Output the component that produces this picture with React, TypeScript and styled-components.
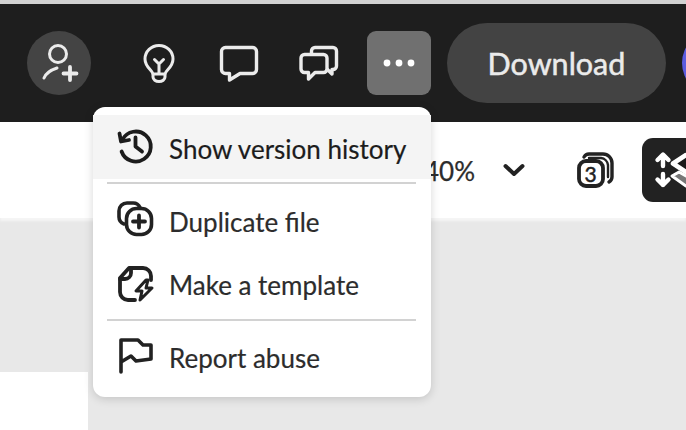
import styled, { createGlobalStyle } from "styled-components";

const Global = createGlobalStyle`
  html, body {
    margin: 0;
    padding: 0;
    background: #e8e8e8;
  }
  * {
    box-sizing: border-box;
  }
`;

const Page = styled.div`
  position: relative;
  width: 686px;
  height: 430px;
  overflow: hidden;
  display: flex;
  flex-direction: column;
  font-family: Lato, "Noto Sans", sans-serif;
  background: #e8e8e8;
  border-top: 4px solid #d2d2d2;
`;

const Header = styled.header`
  flex: none;
  height: 118px;
  background: #1e1e1e;
  display: flex;
  align-items: center;
  padding-left: 27px;
  gap: 16px;
`;

const Avatar = styled.div`
  flex: none;
  width: 64px;
  height: 64px;
  margin-right: 20px;
  border-radius: 50%;
  background: #444;
  display: flex;
  align-items: center;
  justify-content: center;
`;

const IconButton = styled.div<{ $active?: boolean }>`
  flex: none;
  width: 64px;
  height: 64px;
  border-radius: 9px;
  background: ${(p) => (p.$active ? "#707070" : "transparent")};
  display: flex;
  align-items: center;
  justify-content: center;
`;

const DownloadButton = styled.div`
  flex: none;
  width: 219px;
  height: 80px;
  border-radius: 40px;
  background: #434343;
  color: #ebebeb;
  font-size: 30.5px;
  -webkit-text-stroke: 0.5px #ebebeb;
  display: flex;
  align-items: center;
  justify-content: center;
`;

const UserDot = styled.div`
  flex: none;
  width: 64px;
  height: 64px;
  border-radius: 50%;
  background: #5c5ce0;
`;

const Toolbar = styled.div`
  flex: none;
  height: 96px;
  background: #fff;
  display: flex;
  align-items: center;
  padding-left: 424px;
  box-shadow: 0 3px 2px #f5f5f5;
  position: relative;
`;

const Zoom = styled.span`
  flex: none;
  width: 50px;
  padding-top: 2px;
  font-size: 26px;
  -webkit-text-stroke: 0.25px #2c2c2c;
  color: #2c2c2c;
  white-space: nowrap;
`;

const Chevron = styled.div`
  flex: none;
  margin-left: 28px;
  width: 24px;
  height: 24px;
  display: flex;
`;

const Layers = styled.div`
  flex: none;
  margin-left: 51px;
  width: 38px;
  height: 38px;
  position: relative;
  display: flex;
`;

const LayerCount = styled.span`
  position: absolute;
  left: 1px;
  top: 11px;
  width: 25px;
  text-align: center;
  font-size: 21px;
  line-height: 24px;
  -webkit-text-stroke: 0.5px #222;
  color: #222;
`;

const ArrangeTile = styled.div`
  flex: none;
  margin-left: 27px;
  width: 64px;
  height: 64px;
  border-radius: 11px;
  background: #222;
  display: flex;
  align-items: center;
  justify-content: center;
`;

const Workspace = styled.div`
  flex: 1;
  display: flex;
  align-items: flex-end;
`;

const CanvasEdge = styled.div`
  width: 88px;
  height: 58px;
  background: #fff;
`;

const Menu = styled.div`
  position: absolute;
  left: 93px;
  top: 103px;
  width: 338px;
  padding: 8px 0;
  border-radius: 12px;
  background: #fff;
  box-shadow: 0 2px 10px rgba(0, 0, 0, 0.16);
`;

const MenuItem = styled.div<{ $hovered?: boolean }>`
  height: 64px;
  display: flex;
  align-items: center;
  padding-left: 22px;
  gap: 14px;
  background: ${(p) => (p.$hovered ? "#f4f4f4" : "transparent")};
  color: ${(p) => (p.$hovered ? "#1c1c1c" : "#2c2c2c")};
  font-size: 26px;
  -webkit-text-stroke: 0.2px currentColor;
  white-space: nowrap;
`;

const Label = styled.span<{ $top?: number }>`
  padding-top: ${(p) => p.$top ?? 2}px;
`;

const Divider = styled.div`
  height: 2px;
  margin: 3px 15px 4px 14px;
  background: #d2d2d2;
`;

const items = {
  history: (
    <svg width="40" height="40" viewBox="0 0 40 40" fill="none" stroke="#1c1c1c" strokeWidth="3.8" strokeLinecap="round" strokeLinejoin="round">
      <path d="M7.500 12.500A15 15 0 1 1 6.600 24.500" />
      <path d="M4.500 6.500l1.500 8 8-1.500" />
      <path d="M20.500 10.500v9l6.500 5" />
    </svg>
  ),
  duplicate: (
    <svg width="40" height="40" viewBox="0 0 40 40" fill="none" stroke="#222" strokeWidth="3.6" strokeLinecap="round" strokeLinejoin="round">
      <path d="M9 24A7.500 7.500 0 0 1 4 17v-6a8 8 0 0 1 8-8h6a7.500 7.500 0 0 1 7 4.500" />
      <rect x="11.500" y="8.500" width="25" height="26" rx="10" />
      <path d="M24 15.500v12M18 21.500h12" strokeWidth="3.800" />
    </svg>
  ),
  template: (
    <svg width="40" height="40" viewBox="0 0 40 40" fill="none" stroke="#222" strokeWidth="3.800" strokeLinecap="round" strokeLinejoin="round">
      <path d="M20 36h-7a8 8 0 0 1-8-8V14L14 4h14a8 8 0 0 1 8 8v4" />
      <path d="M5 15h5a6 6 0 0 0 6-6V4" />
      <path d="M31 16L21 27h6l-2 9 12-12h-6l2-8z" strokeWidth="3" />
    </svg>
  ),
  flag: (
    <svg width="40" height="40" viewBox="0 0 40 40" fill="none" stroke="#222" strokeWidth="3.600" strokeLinecap="round" strokeLinejoin="round">
      <path d="M6 35V3h17l5 5h8v14l-15 2-5-5-10 6" />
    </svg>
  ),
};

export default function App() {
  return (
    <Page>
      <Global />
      <Header>
        <Avatar>
          <svg width="40" height="40" viewBox="0 0 40 40" fill="none" stroke="#ebebeb" strokeWidth="3" strokeLinecap="round">
            <circle cx="19" cy="11" r="8.500" />
            <path d="M5 35c2-5 7-8 13-10" />
            <path d="M31 24v13M24.500 30.500h13" strokeWidth="3.800" />
          </svg>
        </Avatar>
        <IconButton>
          <svg width="32" height="40" viewBox="0 0 32 40" fill="none" stroke="#ebebeb" strokeWidth="3" strokeLinecap="round" strokeLinejoin="round">
            <path d="M10 31c-1-4-8-7-8-15a14 13.500 0 0 1 28 0c0 8-7 11-8 15z" />
            <path d="M10 31v3a6 4.500 0 0 0 12 0v-3" />
            <path d="M16 30V21l-4.500-4.500M16 21l4.500-4.500" />
          </svg>
        </IconButton>
        <IconButton>
          <svg width="40" height="40" viewBox="0 0 40 40" fill="none" stroke="#ebebeb" strokeWidth="3.400" strokeLinecap="round" strokeLinejoin="round">
            <path d="M6.500 4.500h27a4 4 0 0 1 4 4v18a4 4 0 0 1-4 4H21L10.500 37v-6.500h-4a4 4 0 0 1-4-4v-18a4 4 0 0 1 4-4z" />
          </svg>
        </IconButton>
        <IconButton>
          <svg width="40" height="40" viewBox="0 0 40 40" fill="none" stroke="#ebebeb" strokeWidth="3.400" strokeLinecap="round" strokeLinejoin="round">
            <path d="M12.500 11V8a3.500 3.500 0 0 1 3.500-3.500h18a3.500 3.500 0 0 1 3.500 3.500v15a3.500 3.500 0 0 1-3.500 3.500h-1v4.500l-4.500-4.500" />
            <path d="M5.500 11.500h19a3.500 3.500 0 0 1 3.500 3.500v11a3.500 3.500 0 0 1-3.500 3.500H16L9.500 36v-6.500h-4A3.500 3.500 0 0 1 2 26V15a3.500 3.500 0 0 1 3.500-3.500z" />
          </svg>
        </IconButton>
        <IconButton $active>
          <svg width="32" height="8" viewBox="0 0 32 8" fill="#fff">
            <circle cx="4" cy="4" r="3.400" />
            <circle cx="16" cy="4" r="3.400" />
            <circle cx="28" cy="4" r="3.400" />
          </svg>
        </IconButton>
        <DownloadButton>Download</DownloadButton>
        <UserDot />
      </Header>
      <Toolbar>
        <Zoom>40%</Zoom>
        <Chevron>
          <svg width="24" height="24" viewBox="0 0 24 24" fill="none" stroke="#222" strokeWidth="4" strokeLinecap="round" strokeLinejoin="round">
            <path d="M3.500 8l8.500 8 8.500-8" />
          </svg>
        </Chevron>
        <Layers>
          <svg width="38" height="38" viewBox="0 0 38 38" fill="none" stroke="#222" strokeLinecap="round">
            <rect x="2" y="10" width="24" height="25" rx="7" strokeWidth="3.800" />
            <path d="M7 6a6 6 0 0 1 5-3h14a9 9 0 0 1 9 9v14a6 6 0 0 1-3 5" strokeWidth="3.400" />
            <path d="M12 7h12a8 8 0 0 1 7 7v12" strokeWidth="2.400" />
          </svg>
          <LayerCount>3</LayerCount>
        </Layers>
        <ArrangeTile>
          <svg width="64" height="64" viewBox="0 0 64 64" fill="none">
            <path d="M21 28V17M15.500 22l5.500-5.500 5.500 5.500M21 36v11M15.500 41.500l5.500 5.500 5.500-5.500" stroke="#fff" strokeWidth="4.400" strokeLinecap="round" strokeLinejoin="round" />
            <path d="M30 38l7-4 7 4 7-4 7 4-14 10z" fill="#777" stroke="#fff" strokeWidth="3" strokeLinejoin="round" />
            <path d="M44 17l13 8.500-13 8.500-13-8.500z" fill="#1a1a1a" stroke="#fff" strokeWidth="4.600" strokeLinejoin="round" />
          </svg>
        </ArrangeTile>
      </Toolbar>
      <Workspace>
        <CanvasEdge />
      </Workspace>
      <Menu>
        <MenuItem $hovered>{items.history}<Label $top={3}>Show version history</Label></MenuItem>
        <Divider />
        <MenuItem>{items.duplicate}<Label $top={3}>Duplicate file</Label></MenuItem>
        <MenuItem>{items.template}<Label>Make a template</Label></MenuItem>
        <Divider />
        <MenuItem>{items.flag}<Label>Report abuse</Label></MenuItem>
      </Menu>
    </Page>
  );
}
